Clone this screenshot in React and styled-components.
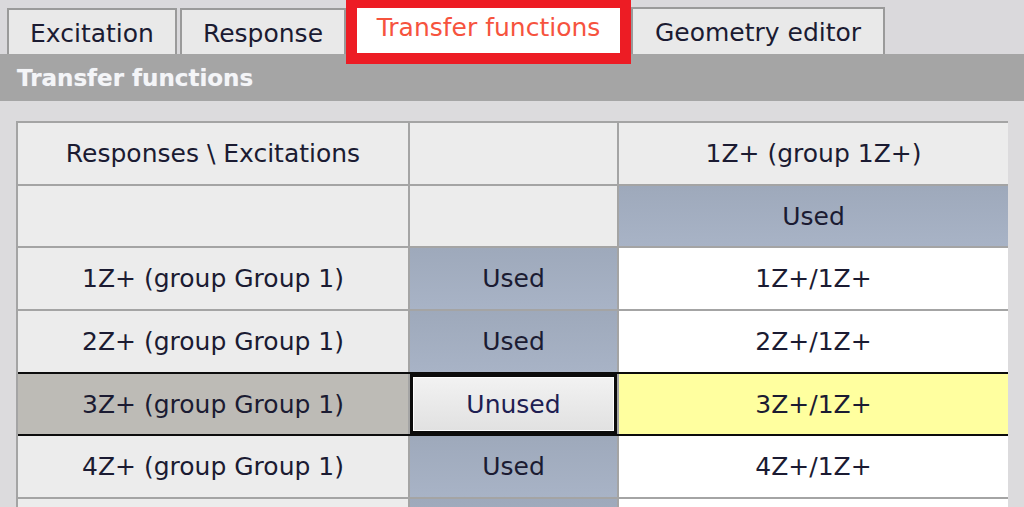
import React from "react";
import styled, { createGlobalStyle, css } from "styled-components";

const GlobalStyle = createGlobalStyle`
  html, body {
    margin: 0;
    padding: 0;
    background: #dad9dc;
  }
  body {
    font-family: "DejaVu Sans", Verdana, sans-serif;
    color: #1b1b32;
  }
`;

const Page = styled.div`
  width: 1024px;
  height: 507px;
  overflow: hidden;
  display: flex;
  flex-direction: column;
`;

const TabBar = styled.div`
  display: flex;
  align-items: flex-end;
  height: 54px;
  padding-left: 7px;
  background: #dad9dc;
  flex-shrink: 0;
`;

const Tab = styled.div`
  box-sizing: border-box;
  width: ${(p) => p.$width}px;
  height: ${(p) => p.$height || 46}px;
  margin-right: ${(p) => p.$gap || 0}px;
  border: 2px solid #9a9a9a;
  border-bottom: none;
  background: #e9e9e9;
  display: flex;
  align-items: center;
  justify-content: center;
  font-size: 25px;
  padding-top: 2px;
  color: #1b1b32;
`;

// the red box round the active tab is an annotation laid over the tabs
const ActiveTab = styled.div`
  position: relative;
  box-sizing: border-box;
  width: ${(p) => p.$width}px;
  height: 54px;
  background: #ffffff;
  display: flex;
  align-items: center;
  justify-content: center;
  font-size: 25px;
  color: #f6533e;

  &::after {
    content: "";
    position: absolute;
    left: 0;
    right: 0;
    top: 0;
    bottom: -10px;
    border: 11px solid #ed1c24;
    border-top-width: 8px;
    pointer-events: none;
    z-index: 2;
  }
`;

const HeaderBar = styled.div`
  height: 47px;
  flex-shrink: 0;
  background: #a5a5a5;
  display: flex;
  align-items: center;
  padding-left: 17px;
  font-size: 23px;
  font-weight: bold;
  color: #f4f5f7;
  text-shadow: 0 0 1px rgba(230, 235, 255, 0.6);
`;

const Body = styled.div`
  flex: 1;
  background: #dcdbdd;
  padding: 20px 0 0 16px;
`;

const Grid = styled.div`
  width: 990px;
  border-left: 2px solid #a4a4a4;
  border-top: 2px solid #a4a4a4;
`;

const Row = styled.div`
  box-sizing: border-box;
  display: grid;
  grid-template-columns: 390px 207px 389px;
  column-gap: 2px;
  height: 62.7px;
  background: #a4a4a4;
  border-bottom: 2px solid ${(p) => p.$line || "#a4a4a4"};
`;

const tones = {
  head: css`
    background: #ececec;
  `,
  used: css`
    background: linear-gradient(#9ea9bb, #a8b3c6);
  `,
  data: css`
    background: #ffffff;
  `,
  sel: css`
    background: #bdbbb6;
  `,
  hl: css`
    background: #ffff9f;
  `,
  btn: css`
    background: linear-gradient(#f3f3f3, #e0e0e0);
    box-shadow: inset 0 0 0 3px #0c0c0c, inset 0 0 0 4px #ffffff;
    color: #1e1e52;
  `,
};

const Cell = styled.div`
  display: flex;
  align-items: center;
  justify-content: center;
  font-size: 25px;
  white-space: nowrap;
  overflow: hidden;
  ${(p) => tones[p.$tone || "head"]}
`;

const responses = [
  { name: "1Z+ (group Group 1)", state: "Used", tf: "1Z+/1Z+" },
  { name: "2Z+ (group Group 1)", state: "Used", tf: "2Z+/1Z+" },
  { name: "3Z+ (group Group 1)", state: "Unused", tf: "3Z+/1Z+", selected: true },
  { name: "4Z+ (group Group 1)", state: "Used", tf: "4Z+/1Z+" },
  { name: "", state: "", tf: "" },
];

function App() {
  return (
    <>
      <GlobalStyle />
      <Page>
        <TabBar>
          <Tab $width={170} $gap={3}>Excitation</Tab>
          <Tab $width={166}>Response</Tab>
          <ActiveTab $width={285}>Transfer functions</ActiveTab>
          <Tab $width={254} $height={47}>Geometry editor</Tab>
        </TabBar>

        <HeaderBar>Transfer functions</HeaderBar>

        <Body>
          <Grid>
            <Row>
              <Cell>Responses \ Excitations</Cell>
              <Cell />
              <Cell>1Z+ (group 1Z+)</Cell>
            </Row>
            <Row>
              <Cell />
              <Cell />
              <Cell $tone="used">Used</Cell>
            </Row>
            {responses.map((r, i) => {
              const nextSelected = responses[i + 1] && responses[i + 1].selected;
              return (
                <Row key={i} $line={r.selected || nextSelected ? "#0c0c0c" : undefined}>
                  <Cell $tone={r.selected ? "sel" : "head"}>{r.name}</Cell>
                  <Cell $tone={r.selected ? "btn" : "used"}>{r.state}</Cell>
                  <Cell $tone={r.selected ? "hl" : "data"}>{r.tf}</Cell>
                </Row>
              );
            })}
          </Grid>
        </Body>
      </Page>
    </>
  );
}

export default App;
